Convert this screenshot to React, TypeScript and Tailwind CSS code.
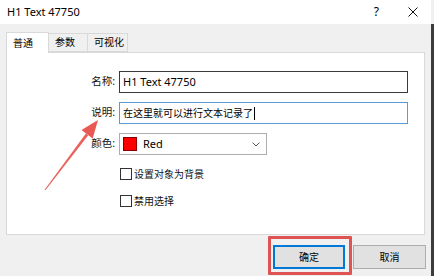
import { useState } from "react";

const font = "font-['Noto_Sans','Noto_Sans_CJK_SC',sans-serif]";

function Checkbox({ label }: { label: string }) {
  return (
    <label className="flex items-center gap-[2px] h-[12px]">
      <span className="w-[12px] h-[12px] border border-[#333] bg-white" />
      <span className="text-[10px] leading-none text-[#111]">{label}</span>
    </label>
  );
}

export default function App() {
  const [tab] = useState(0);
  const tabs = ["普通", "参数", "可视化"];

  return (
    <div className={`relative w-[434px] h-[276px] flex overflow-hidden bg-[#f0f0f0] ${font}`}>
      <div className="flex-1 flex flex-col">
        {/* title bar */}
        <div className="h-[24px] bg-white flex items-center pl-[7px] pr-[13px]">
          <span className="text-[11px] text-black">H1 Text 47750</span>
          <span className="ml-auto text-[12px] text-black mr-[29px]">?</span>
          <svg width="10" height="10" viewBox="0 0 10 10">
            <path d="M0.5 0.5L9.5 9.5M9.5 0.5L0.5 9.5" stroke="#111" strokeWidth="1" />
          </svg>
        </div>

        {/* tabs */}
        <div className="flex items-end pl-[6px] pt-[8px] h-[28px]">
          {tabs.map((t, i) =>
            i === tab ? (
              <div
                key={t}
                className="w-[43px] h-[21px] bg-white border border-b-0 border-[#d9d9d9] relative z-10 -mb-px flex items-center pl-[6px] text-[10px] text-black whitespace-nowrap"
              >
                {t}
              </div>
            ) : (
              <div
                key={t}
                className={`${i === 1 ? "w-[39px]" : "w-[40px]"} h-[19px] bg-[#f0f0f0] border border-l-0 border-[#d9d9d9] flex items-center pl-[6px] text-[10px] text-black whitespace-nowrap`}
              >
                {t}
              </div>
            )
          )}
        </div>

        {/* panel */}
        <div className="ml-[6px] w-[419px] h-[183px] bg-white border border-[#d9d9d9] pt-[18px]">
          <div className="grid grid-cols-[108px_289px] gap-x-[4px] gap-y-[9px] items-center">
            <span className="text-right text-[10.5px] text-[#111]">名称:</span>
            <div className="h-[22px] border border-[#3a3a3a] flex items-center pl-[3px] text-[11px] text-black">
              H1 Text 47750
            </div>
            <span className="text-right text-[10.5px] text-[#111]">说明:</span>
            <div className="h-[22px] border border-[#5b9bd5] flex items-center pl-[3px] text-[10px] text-black">
              在这里就可以进行文本记录了
              <span className="w-px h-[13px] bg-black ml-[1px]" />
            </div>
            <span className="text-right text-[10.5px] text-[#111]">颜色:</span>
            <div className="w-[148px] h-[22px] border border-[#adadad] bg-white flex items-center pl-[3px] pr-[6px]">
              <span className="w-[14px] h-[14px] bg-[#ff0000] border border-[#8a0000]" />
              <span className="ml-[6px] text-[11px] text-black">Red</span>
              <svg className="ml-auto" width="8" height="5" viewBox="0 0 8 5">
                <path d="M0.5 0.5L4 4L7.5 0.5" stroke="#555" strokeWidth="1" fill="none" />
              </svg>
            </div>
          </div>
          <div className="ml-[113px] mt-[13px] flex flex-col gap-[15px]">
            <Checkbox label="设置对象为背景" />
            <Checkbox label="禁用选择" />
          </div>
        </div>

        {/* buttons */}
        <div className="flex justify-end gap-[8px] pr-[5px] mt-[10px]">
          <button className="w-[72px] h-[24px] bg-[#e1e1e1] border-2 border-[#0078d7] text-[10px] text-black">
            确定
          </button>
          <button className="w-[73px] h-[24px] bg-[#e1e1e1] border border-[#adadad] text-[10px] text-black">
            取消
          </button>
        </div>
      </div>
      <div className="w-[3px] bg-[#3c3c3c] mt-[24px]" />

      {/* annotation: arrow */}
      <svg className="absolute left-0 top-0 pointer-events-none" width="434" height="276">
        <polygon
          points="44.6,189.7 45.4,190.3 88.3,135.2 85.9,133.4"
          fill="#e8504a"
          opacity="0.9"
        />
        <polygon points="98,120 92.7,138.5 81.5,130.1" fill="#e8504a" opacity="0.95" />
      </svg>
      {/* annotation: highlight box */}
      <div className="absolute left-[268px] top-[236px] w-[84px] h-[39px] border-[3px] border-[#e05353] rounded-[1px] pointer-events-none" />
    </div>
  );
}
